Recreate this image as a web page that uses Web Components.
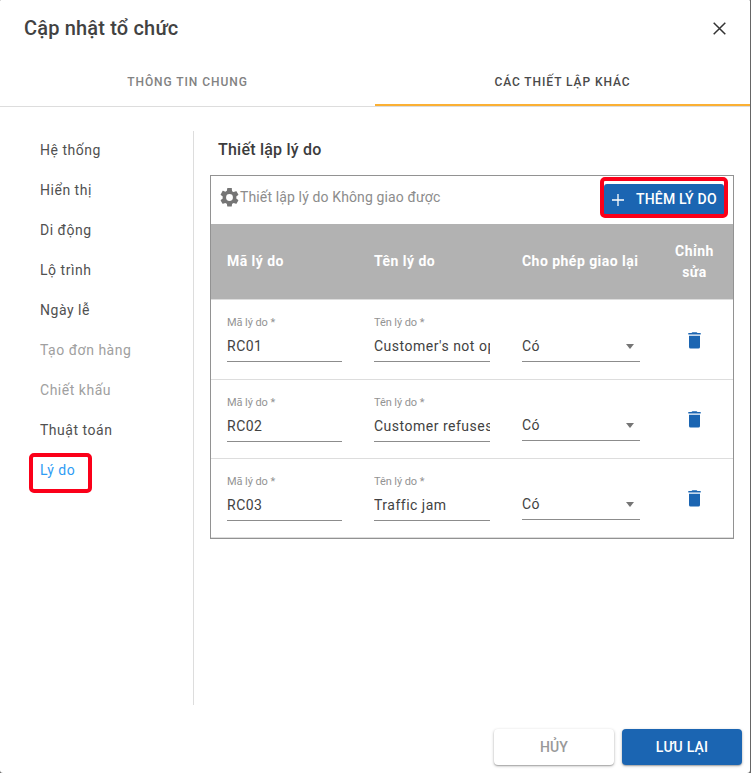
<!DOCTYPE html>
<html lang="vi">
<head>
<meta charset="utf-8">
<title>Cập nhật tổ chức</title>
<style>
html,body{margin:0;height:100%;background:#666}
body{font-family:Roboto,"Liberation Sans",sans-serif;overflow:hidden}
</style>
</head>
<body>
<org-dialog heading="Cập nhật tổ chức">
  <tab-item slot="tabs">THÔNG TIN CHUNG</tab-item>
  <tab-item slot="tabs" active>CÁC THIẾT LẬP KHÁC</tab-item>
  <nav-item slot="nav">Hệ thống</nav-item>
  <nav-item slot="nav">Hiển thị</nav-item>
  <nav-item slot="nav">Di động</nav-item>
  <nav-item slot="nav">Lộ trình</nav-item>
  <nav-item slot="nav">Ngày lễ</nav-item>
  <nav-item slot="nav" disabled>Tạo đơn hàng</nav-item>
  <nav-item slot="nav" disabled>Chiết khấu</nav-item>
  <nav-item slot="nav">Thuật toán</nav-item>
  <nav-item slot="nav" active>Lý do</nav-item>
  <reason-panel>
    <reason-row code="RC01" name="Customer's not open"></reason-row>
    <reason-row code="RC02" name="Customer refuses"></reason-row>
    <reason-row code="RC03" name="Traffic jam"></reason-row>
  </reason-panel>
  <action-button slot="actions">HỦY</action-button>
  <action-button slot="actions" primary>LƯU LẠI</action-button>
</org-dialog>
<script>
const define = (name, html) => customElements.define(name, class extends HTMLElement {
  constructor() {
    super();
    const t = document.createElement('template');
    t.innerHTML = html;
    this.attachShadow({mode: 'open'}).append(t.content.cloneNode(true));
  }
  connectedCallback() {
    this.shadowRoot.querySelectorAll('[data-attr]').forEach(e => {
      e.textContent = this.getAttribute(e.dataset.attr) || '';
    });
  }
});

define('org-dialog', `<style>
:host{display:flex;flex-direction:column;box-sizing:border-box;width:750px;height:773px;background:#fff;border-radius:1px 1px 3px 3px;color:#424242}
header{height:58px;box-sizing:border-box;padding:0 21px 2px 24px;display:flex;align-items:center;justify-content:space-between}
h1{margin:0;font-size:20px;font-weight:500;line-height:32px;letter-spacing:.17px}
svg{display:block;width:19px;height:19px;margin-top:1px}
.tabs{display:grid;grid-template-columns:1fr 1fr;height:48px;border-bottom:1px solid #ddd}
.body{display:flex;height:574px;padding-top:24px}
nav{width:193px;border-right:1px solid #ddd}
main{flex:1;padding-left:16px}
footer{display:flex;justify-content:flex-end;gap:8px;padding:24px 8px 0}
</style>
<header><h1 data-attr="heading"></h1>
<svg viewBox="0 0 19 19" fill="none" stroke="#333" stroke-width="1.5"><path d="M3.7 3.7 15.3 15.3M15.3 3.7 3.7 15.3"/></svg></header>
<div class="tabs"><slot name="tabs"></slot></div>
<div class="body"><nav><slot name="nav"></slot></nav><main><slot></slot></main></div>
<footer><slot name="actions"></slot></footer>`);

define('tab-item', `<style>
:host{display:flex;align-items:center;justify-content:center;box-sizing:border-box;padding-top:2px;font-size:12px;font-weight:500;letter-spacing:.93px;color:#828282;border-bottom:2px solid transparent}
:host([active]){color:#4a4a4a;border-color:#fbb034}
</style><slot></slot>`);

define('nav-item', `<style>
:host{display:flex;align-items:center;position:relative;height:40px;padding-left:40px;font-size:14px;letter-spacing:.52px;color:#505050;top:-1px}
:host([disabled]){color:#a0a0a0}
:host([active]){color:#2f9cf4}
:host([active])::after{content:"";position:absolute;left:29px;top:3px;width:55px;height:32px;border:4px solid #fb0019;border-radius:5px}
</style><slot></slot>`);

define('reason-panel', `<style>
:host{display:block}
h2{margin:0;padding:7px 0 0 8px;height:37px;font-size:16px;line-height:24px;font-weight:500;color:#3c3c3c;letter-spacing:.22px}
.box{box-sizing:border-box;width:524px;height:364px;border:1px solid #929292}
.bar{display:flex;align-items:center;height:48px;padding-left:9px;box-sizing:border-box;font-size:14px;color:#8c8c8c;letter-spacing:.13px}
.bar svg{width:19px;height:19px;margin-right:1px}
.bar span{position:relative;top:-3px}
.bar svg{position:relative;top:-3px}
.add{position:relative;margin-left:auto;margin-right:9px;width:120px;height:30px;top:-1px;border-radius:3px 3px 0 0;background:#1b65b2;color:#fff;font-weight:500;display:flex;align-items:center;letter-spacing:.2px;white-space:nowrap}
.add svg{width:14px;height:14px;margin:2px 11px 0 7px;top:0}
.add::after{content:"";position:absolute;left:-4px;top:-7px;width:120px;height:33px;border:4px solid #fb0019;border-radius:5px}
.head{display:grid;grid-template-columns:147px 148px 150px 77px;height:75px;align-items:center;background:#b2b2b2;border-bottom:1px solid #ddd;color:#fff;font-size:14px;line-height:21px;font-weight:700;letter-spacing:.46px}
.head div{padding:0 0 0 16px;white-space:nowrap}
.head .last{padding:0;text-align:center}
</style>
<h2>Thiết lập lý do</h2>
<div class="box">
<div class="bar"><svg viewBox="2 2 20 20" fill="#757575"><path d="M19.14 12.94c.04-.3.06-.61.06-.94s-.02-.64-.07-.94l2.03-1.58c.18-.14.23-.41.12-.61l-1.92-3.32c-.12-.22-.37-.29-.59-.22l-2.39.96c-.5-.38-1.03-.7-1.62-.94l-.36-2.54A.484.484 0 0 0 13.92 2h-3.84c-.24 0-.43.17-.47.41l-.36 2.54c-.59.24-1.13.57-1.62.94l-2.39-.96c-.22-.08-.47 0-.59.22L2.74 8.87c-.12.21-.08.47.12.61l2.03 1.58c-.05.3-.09.63-.09.94s.02.64.07.94l-2.03 1.58c-.18.14-.23.41-.12.61l1.92 3.32c.12.22.37.29.59.22l2.39-.96c.5.38 1.03.7 1.62.94l.36 2.54c.05.24.24.41.48.41h3.84c.24 0 .44-.17.47-.41l.36-2.54c.59-.24 1.13-.56 1.62-.94l2.39.96c.22.08.47 0 .59-.22l1.92-3.32c.12-.22.07-.47-.12-.61zM12 15.6A3.6 3.6 0 1 1 12 8.4a3.6 3.6 0 0 1 0 7.2"/></svg><span>Thiết lập lý do Không giao được</span>
<div class="add"><svg viewBox="0 0 14 14" stroke="#fff" stroke-width="1.3"><path d="M1 7h12M7 1v12"/></svg>THÊM LÝ DO</div></div>
<div class="head"><div>Mã lý do</div><div>Tên lý do</div><div>Cho phép giao lại</div><div class="last">Chỉnh<br>sửa</div></div>
<slot></slot>
</div>`);

define('reason-row', `<style>
:host{display:grid;grid-template-columns:147px 148px 150px 77px;box-sizing:border-box;height:79px;border-bottom:1px solid #ddd;--lift:0px}
:host(:first-of-type){height:80px;--lift:1px}
.cell{padding:15px 16px 0;height:47px}
.field{height:46px;border-bottom:1px solid #8c8c8c;overflow:hidden;white-space:nowrap;font-size:14px;letter-spacing:.5px;color:#424242}
.label{font-size:11px;line-height:16px;letter-spacing:-.08px;color:#939393}
.value{line-height:20px;padding-top:5px}
.select{height:calc(45px + var(--lift));display:flex;align-items:flex-end;justify-content:space-between;padding-right:6px}
.select .value{padding-bottom:5px}
.select i{border:4.5px solid transparent;border-top:5px solid #757575;border-bottom:0;margin-bottom:12px}
.trash{padding:calc(31px + var(--lift)) 0 0 32px}
svg{display:block;width:13px;height:17px}
</style>
<div class="cell"><div class="field"><div class="label">Mã lý do *</div><div class="value" data-attr="code"></div></div></div>
<div class="cell"><div class="field"><div class="label">Tên lý do *</div><div class="value" data-attr="name"></div></div></div>
<div class="cell"><div class="field select"><div class="value">Có</div><i></i></div></div>
<div class="trash"><svg viewBox="0 0 13 17" fill="#1b65b2"><path d="M.3 1.1H3.5L4.4.3H8.6L9.5 1.1H12.7V2.5H.3ZM1 3.7H12V14.9Q12 16.5 10.4 16.5H2.6Q1 16.5 1 14.9Z"/></svg></div>`);

define('action-button', `<style>
:host{display:flex;align-items:center;justify-content:center;width:120px;height:36px;border-radius:4px;background:#fff;color:#999;font-size:14px;font-weight:500;letter-spacing:.2px;box-shadow:0 1px 3px rgba(0,0,0,.3),0 1px 1px rgba(0,0,0,.15)}
:host([primary]){background:#1b65b2;color:#fff}
</style><slot></slot>`);
</script>
</body>
</html>
